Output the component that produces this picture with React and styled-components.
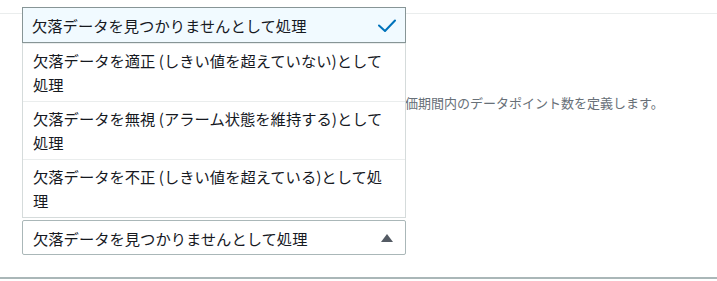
import styled, { createGlobalStyle } from 'styled-components'

const GlobalStyle = createGlobalStyle`
  html, body {
    margin: 0;
    padding: 0;
    background: #ffffff;
  }
  body {
    font-family: "Noto Sans CJK JP", "Liberation Sans", sans-serif;
    color: #16191f;
  }
`

const Page = styled.div`
  width: 717px;
  height: 281px;
  overflow: hidden;
  background: #ffffff;
`

const Section = styled.div`
  margin-top: 13px;
  height: 263px;
  box-sizing: content-box;
  border-top: 1px solid #eaeded;
  border-bottom: 2px solid #aab7b8;
  padding: 0 22px;
  display: flex;
  flex-direction: column;
`

const Hint = styled.p`
  margin: 79px 0 0 370px;
  font-size: 13px;
  line-height: 20px;
  color: #687078;
  white-space: nowrap;
`

const Field = styled.div`
  position: relative;
  width: 384px;
  margin-top: auto;
  margin-bottom: 22px;
`

const Trigger = styled.button`
  display: flex;
  align-items: center;
  justify-content: space-between;
  width: 100%;
  height: 35px;
  box-sizing: border-box;
  padding: 0 12px 0 10px;
  background: #ffffff;
  border: 1px solid #aab7b8;
  border-radius: 2px;
  font-family: inherit;
  font-size: 15.3px;
  color: #16191f;
  text-align: left;
  cursor: pointer;
`

const Caret = styled.span`
  width: 0;
  height: 0;
  border-left: 6px solid transparent;
  border-right: 6px solid transparent;
  border-bottom: 8px solid #545b64;
`

const Menu = styled.ul`
  position: absolute;
  left: 0;
  right: 0;
  bottom: calc(100% + 2px);
  margin: 0;
  padding: 0;
  list-style: none;
  background: #ffffff;
  border: 1px solid #d5dbdb;
  border-top: none;
`

const Option = styled.li`
  display: flex;
  align-items: center;
  justify-content: space-between;
  gap: 8px;
  padding: ${p => (p.$selected ? '5px 9px' : '4px 10px 5px')};
  font-size: 15.3px;
  line-height: 24px;
  background: ${p => (p.$selected ? '#f1faff' : '#ffffff')};
  border: ${p => (p.$selected ? '1px solid #879596' : 'none')};
  border-top: ${p => (p.$selected ? '1px solid #879596' : '1px solid #eaeded')};
  margin: ${p => (p.$selected ? '0 -1px' : '0')};
  cursor: pointer;
`

const Check = () => (
  <svg width="18" height="13" viewBox="0 0 18 13" fill="none">
    <polyline
      points="1,6.5 7,12 17,1.5"
      stroke="#0073bb"
      strokeWidth="2"
      strokeLinecap="round"
      strokeLinejoin="round"
    />
  </svg>
)

const options = [
  '欠落データを見つかりませんとして処理',
  '欠落データを適正 (しきい値を超えていない)として処理',
  '欠落データを無視 (アラーム状態を維持する)として処理',
  '欠落データを不正 (しきい値を超えている)として処理',
]

export default function App() {
  const selected = 0
  return (
    <Page>
      <GlobalStyle />
      <Section>
        <Hint>評価期間内のデータポイント数を定義します。</Hint>
        <Field>
          <Menu>
            {options.map((o, i) => (
              <Option key={o} $selected={i === selected}>
                <span>{o}</span>
                {i === selected && <Check />}
              </Option>
            ))}
          </Menu>
          <Trigger>
            <span>{options[selected]}</span>
            <Caret />
          </Trigger>
        </Field>
      </Section>
    </Page>
  )
}
